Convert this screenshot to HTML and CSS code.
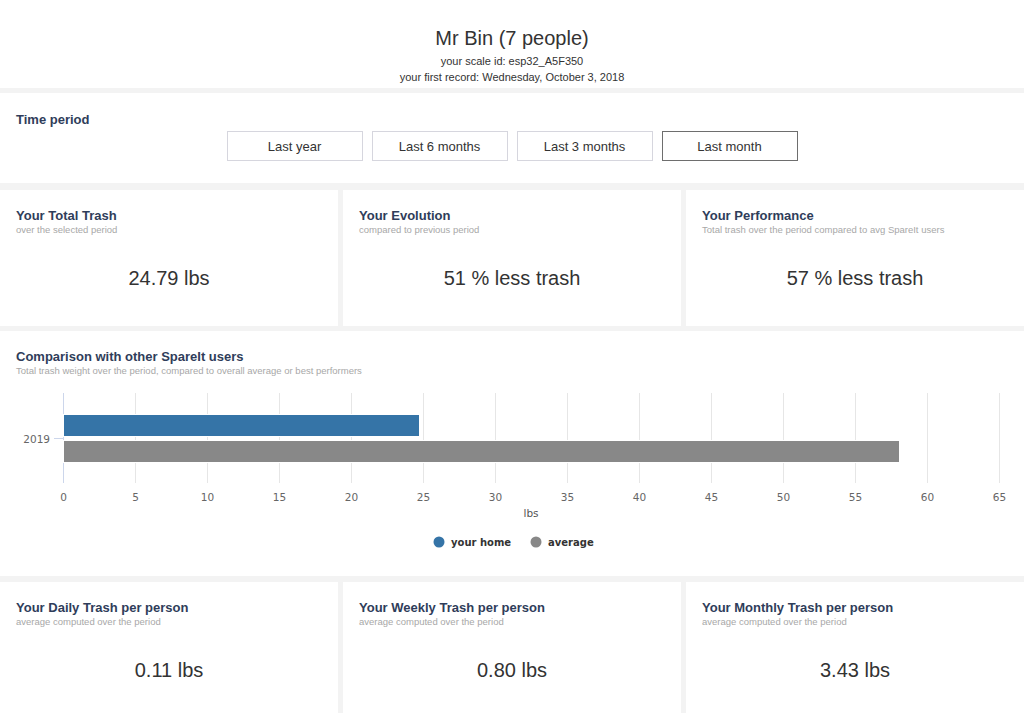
FILE: index.html
```html
<!DOCTYPE html>
<html lang="en">
<head>
<meta charset="utf-8">
<title>Mr Bin dashboard</title>
<link rel="stylesheet" href="styles.css">
</head>
<body>
<header class="head">
  <h1 class="head-title">Mr Bin (7 people)</h1>
  <div class="head-line">your scale id: esp32_A5F350</div>
  <div class="head-line">your first record: Wednesday, October 3, 2018</div>
</header>

<section class="panel period">
  <h2 class="panel-title">Time period</h2>
  <div class="period-buttons">
    <button class="period-btn">Last year</button>
    <button class="period-btn">Last 6 months</button>
    <button class="period-btn">Last 3 months</button>
    <button class="period-btn active">Last month</button>
  </div>
</section>

<div class="cards cards-top">
  <section class="card">
    <h2 class="panel-title">Your Total Trash</h2>
    <div class="panel-sub">over the selected period</div>
    <div class="card-value">24.79 lbs</div>
  </section>
  <section class="card">
    <h2 class="panel-title">Your Evolution</h2>
    <div class="panel-sub">compared to previous period</div>
    <div class="card-value">51 % less trash</div>
  </section>
  <section class="card">
    <h2 class="panel-title">Your Performance</h2>
    <div class="panel-sub">Total trash over the period compared to avg SpareIt users</div>
    <div class="card-value">57 % less trash</div>
  </section>
</div>

<section class="panel chart-panel">
  <div class="chart-head">
    <h2 class="panel-title">Comparison with other SpareIt users</h2>
    <div class="panel-sub">Total trash weight over the period, compared to overall average or best performers</div>
  </div>
  <svg class="chart" viewBox="0 0 1024 175" width="1024" height="175">
    <g class="grid">
      <line x1="135.5" y1="8" x2="135.5" y2="98"/>
      <line x1="207.5" y1="8" x2="207.5" y2="98"/>
      <line x1="279.5" y1="8" x2="279.5" y2="98"/>
      <line x1="351.5" y1="8" x2="351.5" y2="98"/>
      <line x1="423.5" y1="8" x2="423.5" y2="98"/>
      <line x1="495.5" y1="8" x2="495.5" y2="98"/>
      <line x1="567.5" y1="8" x2="567.5" y2="98"/>
      <line x1="639.5" y1="8" x2="639.5" y2="98"/>
      <line x1="711.5" y1="8" x2="711.5" y2="98"/>
      <line x1="783.5" y1="8" x2="783.5" y2="98"/>
      <line x1="855.5" y1="8" x2="855.5" y2="98"/>
      <line x1="927.5" y1="8" x2="927.5" y2="98"/>
      <line x1="999.5" y1="8" x2="999.5" y2="98"/>
    </g>
    <line class="axis" x1="63.5" y1="8" x2="63.5" y2="98"/>
    <line class="axis" x1="54" y1="53.5" x2="63" y2="53.5"/>
    <rect class="bar-home" x="63.5" y="29.5" width="356" height="22"/>
    <rect class="bar-avg" x="63.5" y="55.5" width="836" height="22"/>
    <text class="tick" x="50" y="57.5" text-anchor="end">2019</text>
    <g class="tick" text-anchor="middle">
      <text x="63.5" y="116">0</text>
      <text x="135.5" y="116">5</text>
      <text x="207.5" y="116">10</text>
      <text x="279.5" y="116">15</text>
      <text x="351.5" y="116">20</text>
      <text x="423.5" y="116">25</text>
      <text x="495.5" y="116">30</text>
      <text x="567.5" y="116">35</text>
      <text x="639.5" y="116">40</text>
      <text x="711.5" y="116">45</text>
      <text x="783.5" y="116">50</text>
      <text x="855.5" y="116">55</text>
      <text x="927.5" y="116">60</text>
      <text x="999.5" y="116">65</text>
    </g>
    <text class="axis-title" x="531" y="132" text-anchor="middle">lbs</text>
    <circle class="dot-home" cx="439" cy="157" r="5.5"/>
    <text class="legend" x="451" y="161">your home</text>
    <circle class="dot-avg" cx="536" cy="157" r="5.5"/>
    <text class="legend" x="548" y="161">average</text>
  </svg>
</section>

<div class="cards cards-bottom">
  <section class="card">
    <h2 class="panel-title">Your Daily Trash per person</h2>
    <div class="panel-sub">average computed over the period</div>
    <div class="card-value">0.11 lbs</div>
  </section>
  <section class="card">
    <h2 class="panel-title">Your Weekly Trash per person</h2>
    <div class="panel-sub">average computed over the period</div>
    <div class="card-value">0.80 lbs</div>
  </section>
  <section class="card">
    <h2 class="panel-title">Your Monthly Trash per person</h2>
    <div class="panel-sub">average computed over the period</div>
    <div class="card-value">3.43 lbs</div>
  </section>
</div>
</body>
</html>
```

FILE: styles.css
```css
* { box-sizing: border-box; }

html, body {
  margin: 0;
  padding: 0;
}

body {
  background: #f3f3f3;
  font-family: "Liberation Sans", Arial, Helvetica, sans-serif;
  color: #333;
}

.head {
  background: #fff;
  height: 88px;
  padding-top: 26px;
  text-align: center;
}

.head-title {
  margin: 0 0 3px;
  font-size: 20px;
  line-height: 24px;
  font-weight: normal;
  color: #333;
}

.head-line {
  font-size: 11px;
  line-height: 16px;
  color: #333;
}

.panel {
  background: #fff;
}

.panel-title {
  margin: 0;
  font-size: 13px;
  line-height: 16px;
  font-weight: bold;
  color: #2f3d5a;
}

.panel-sub {
  font-size: 9.5px;
  line-height: 12px;
  color: #a8a8a8;
}

.period {
  margin-top: 5px;
  height: 90px;
  padding: 19px 16px 0;
}

.period-buttons {
  display: flex;
  justify-content: center;
  gap: 9px;
  margin-top: 3px;
}

.period-btn {
  width: 136px;
  height: 30px;
  background: #fff;
  border: 1px solid #d6d6de;
  font-family: "Liberation Sans", Arial, Helvetica, sans-serif;
  font-size: 13px;
  color: #333;
  padding: 0;
}

.period-btn.active {
  border-color: #6e6e6e;
}

.cards {
  display: flex;
  gap: 5px;
}

.cards-top {
  margin-top: 7px;
  height: 136px;
}

.cards-bottom {
  margin-top: 6px;
  height: 131px;
}

.card {
  flex: 1;
  background: #fff;
  padding: 18px 16px 0;
}

.card-value {
  margin-top: 30px;
  font-size: 20px;
  line-height: 24px;
  text-align: center;
  color: #333;
}

.chart-panel {
  margin-top: 5px;
  height: 245px;
}

.chart-head {
  padding: 18px 16px 0;
}

.chart {
  display: block;
  margin-top: 8px;
}

.grid line {
  stroke: #e6e6e6;
  stroke-width: 1;
}

.axis {
  stroke: #ccd6eb;
  stroke-width: 1;
}

.bar-home {
  fill: #3574a7;
  stroke: #fff;
  stroke-width: 1;
}

.bar-avg {
  fill: #888888;
  stroke: #fff;
  stroke-width: 1;
}

.tick, .axis-title {
  font-family: "DejaVu Sans", Verdana, sans-serif;
  font-size: 10.5px;
  fill: #666;
}

.axis-title {
  fill: #555;
}

.legend {
  font-family: "DejaVu Sans", Verdana, sans-serif;
  font-size: 10px;
  font-weight: bold;
  fill: #333;
}

.dot-home { fill: #3574a7; }
.dot-avg { fill: #888888; }
```
